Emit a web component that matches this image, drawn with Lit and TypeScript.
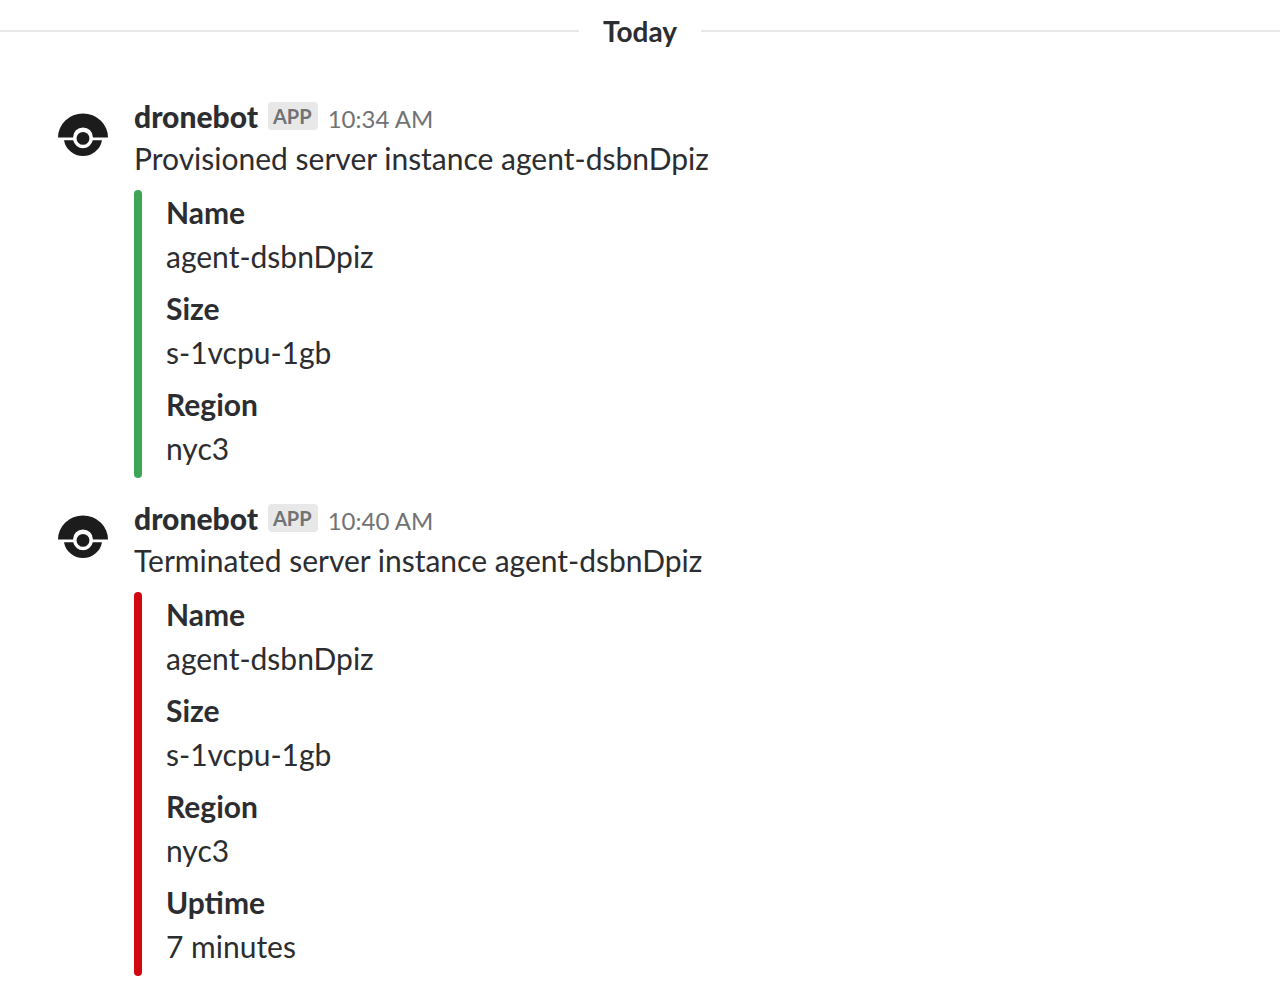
import { LitElement, html, css } from "lit";
import { customElement } from "lit/decorators.js";

interface Field { title: string; value: string; }
interface Message { time: string; text: string; tone: "good" | "danger"; fields: Field[]; }

const baseFields: Field[] = [
  { title: "Name", value: "agent-dsbnDpiz" },
  { title: "Size", value: "s-1vcpu-1gb" },
  { title: "Region", value: "nyc3" },
];

const messages: Message[] = [
  { time: "10:34 AM", text: "Provisioned server instance agent-dsbnDpiz", tone: "good", fields: baseFields },
  { time: "10:40 AM", text: "Terminated server instance agent-dsbnDpiz", tone: "danger", fields: [...baseFields, { title: "Uptime", value: "7 minutes" }] },
];

@customElement("app-root")
export class AppRoot extends LitElement {
  static styles = css`
    :host { display: block; min-height: 100vh; background: #fff; color: #2c2d30; font-family: Lato, sans-serif; font-size: 30px; line-height: 44px; }
    .divider { display: flex; align-items: center; gap: 24px; height: 62px; }
    .divider::before, .divider::after { content: ""; flex: 1; height: 2px; background: #e8e8e8; }
    .day { margin: 0; font-size: 28px; font-weight: 700; line-height: 32px; }
    .list { display: flex; flex-direction: column; gap: 18px; padding: 32px 32px 30px 56px; }
    .message { display: grid; grid-template-columns: 54px 1fr; column-gap: 24px; }
    .avatar { width: 54px; height: 54px; margin-top: 18px; }
    .head { display: flex; align-items: baseline; height: 44px; gap: 10px; }
    .name { font-weight: 900; margin: 0; font-size: 30px; }
    .badge { align-self: center; background: #e8e8e8; color: #717274; font-size: 20px; font-weight: 700; line-height: 28px; border-radius: 4px; padding: 0 6px 0 5px; }
    .time { color: #717274; font-size: 24px; }
    .text { margin: 0; line-height: 40px; }
    .attachment { display: flex; gap: 24px; margin-top: 12px; }
    .bar { width: 8px; border-radius: 4px; }
    .good { background: #3fa556; }
    .danger { background: #cf0814; }
    .fields { display: flex; flex-direction: column; gap: 8px; margin: 0; padding-bottom: 8px; }
    dt { font-weight: 700; }
    dd { margin: 0; }
  `;

  private avatar() {
    return html`<svg class="avatar" viewBox="0 0 54 54" role="img" aria-label="dronebot">
      <path fill="#1c1c1c" d="M2 25.4A25 24 0 0 1 52 25.4H37A10 10 0 0 0 17 25.4Z"/>
      <circle cx="27" cy="26.4" r="6.4" fill="#1c1c1c"/>
      <path fill="#1c1c1c" d="M8 28.2H17.2A10 10 0 0 0 36.8 28.2H46A19.3 19.3 0 0 1 8 28.2Z"/>
    </svg>`;
  }

  render() {
    return html`<main>
      <div class="divider"><h1 class="day">Today</h1></div>
      <div class="list">
        ${messages.map((m) => html`<article class="message">
          ${this.avatar()}
          <div>
            <div class="head"><h2 class="name">dronebot</h2><span class="badge">APP</span><time class="time">${m.time}</time></div>
            <p class="text">${m.text}</p>
            <div class="attachment">
              <div class="bar ${m.tone}"></div>
              <dl class="fields">${m.fields.map((f) => html`<div><dt>${f.title}</dt><dd>${f.value}</dd></div>`)}</dl>
            </div>
          </div>
        </article>`)}
      </div>
    </main>`;
  }
}
